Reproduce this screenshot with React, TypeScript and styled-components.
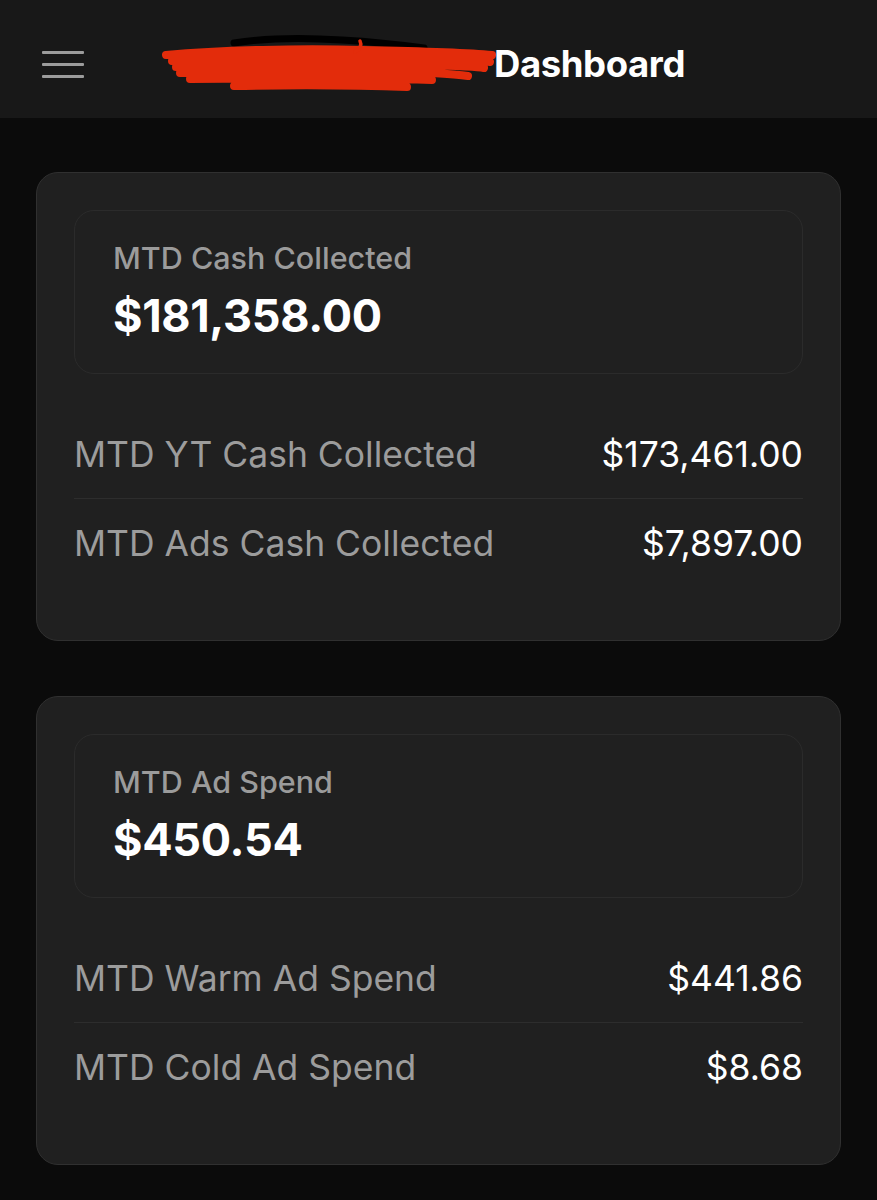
import React from 'react'
import styled, { createGlobalStyle } from 'styled-components'

const GlobalStyle = createGlobalStyle`
  html, body {
    margin: 0;
    padding: 0;
    background: #0b0b0b;
  }
  body {
    font-family: Inter, 'Noto Sans', 'Liberation Sans', sans-serif;
    -webkit-font-smoothing: antialiased;
  }
`

const Page = styled.div`
  min-height: 1200px;
  background: #0b0b0b;
`

const Header = styled.header`
  height: 118px;
  background: #181818;
  display: flex;
  align-items: center;
  padding: 10px 0 0 42px;
  box-sizing: border-box;
`

const MenuButton = styled.button`
  width: 42px;
  height: 27px;
  padding: 0;
  border: none;
  background: transparent;
  display: flex;
  flex-direction: column;
  justify-content: space-between;
  cursor: pointer;
`

const MenuLine = styled.span`
  display: block;
  height: 3px;
  width: 100%;
  background: #9c9c9c;
  border-radius: 1px;
`

const TitleWrap = styled.div`
  display: flex;
  align-items: center;
  margin-left: 78px;
`

const Scribble = styled.svg`
  width: 336px;
  height: 64px;
  margin-right: -4px;
  margin-top: 2px;
`

const Title = styled.h1`
  margin: 0;
  font-size: 36.5px;
  font-weight: 700;
  color: #ffffff;
  letter-spacing: -0.4px;
`

const Content = styled.main`
  display: flex;
  flex-direction: column;
  gap: 55px;
  padding: 54px 36px 40px;
`

const Card = styled.section`
  background: #202020;
  border: 1px solid #303030;
  border-radius: 22px;
  padding: 37px 37px 53px;
`

const SummaryBox = styled.div`
  height: 164px;
  box-sizing: border-box;
  border: 1px solid #2b2b2b;
  border-radius: 20px;
  padding: 30px 38px 0;
  margin-bottom: 36px;
`

const SummaryLabel = styled.div`
  font-size: 30.5px;
  line-height: 34px;
  color: #9b9b9b;
  font-weight: 500;
`

const SummaryValue = styled.div`
  font-size: 45px;
  line-height: 54px;
  font-weight: 700;
  color: #ffffff;
  margin-top: 14px;
  letter-spacing: -0.3px;
`

const Row = styled.div<{ $divider?: boolean }>`
  height: 88px;
  display: flex;
  align-items: center;
  justify-content: space-between;
  border-top: ${(p) => (p.$divider ? '1px solid #2d2d2d' : 'none')};
`

const RowLabel = styled.span`
  font-size: 35.5px;
  color: #9c9c9c;
`

const RowValue = styled.span`
  font-size: 35.5px;
  color: #ffffff;
`

interface Metric {
  label: string
  value: string
}

interface Section {
  title: string
  total: string
  items: Metric[]
}

const sections: Section[] = [
  {
    title: 'MTD Cash Collected',
    total: '$181,358.00',
    items: [
      { label: 'MTD YT Cash Collected', value: '$173,461.00' },
      { label: 'MTD Ads Cash Collected', value: '$7,897.00' },
    ],
  },
  {
    title: 'MTD Ad Spend',
    total: '$450.54',
    items: [
      { label: 'MTD Warm Ad Spend', value: '$441.86' },
      { label: 'MTD Cold Ad Spend', value: '$8.68' },
    ],
  },
]

const RedactScribble: React.FC = () => (
  <Scribble viewBox="0 0 336 64" fill="none">
    {/* black marker stroke on top */}
    <path d="M72 10 C110 4 150 5 180 7 C215 9 240 12 262 15" stroke="#000" strokeWidth="7" strokeLinecap="round" />
    {/* red redaction strokes */}
    <path
      d="M4 22 C60 17 140 15 200 17 C250 18 300 19 330 22 M10 28 C80 24 170 23 250 25 C290 26 315 27 328 29 M14 34 C90 31 180 30 260 32 C300 33 318 34 322 35 M18 40 C100 38 190 38 270 40 C290 41 300 42 306 43 M28 46 C110 45 200 45 270 47 M72 53 C130 52 190 52 245 54"
      stroke="#e32c0b"
      strokeWidth="8"
      strokeLinecap="round"
    />
    <path d="M198 8 C200 12 198 16 193 19" stroke="#e32c0b" strokeWidth="3.5" strokeLinecap="round" />
  </Scribble>
)

const MetricCard: React.FC<{ section: Section }> = ({ section }) => (
  <Card>
    <SummaryBox>
      <SummaryLabel>{section.title}</SummaryLabel>
      <SummaryValue>{section.total}</SummaryValue>
    </SummaryBox>
    {section.items.map((item, i) => (
      <Row key={item.label} $divider={i > 0}>
        <RowLabel>{item.label}</RowLabel>
        <RowValue>{item.value}</RowValue>
      </Row>
    ))}
  </Card>
)

const App: React.FC = () => {
  return (
    <Page>
      <GlobalStyle />
      <Header>
        <MenuButton aria-label="menu">
          <MenuLine />
          <MenuLine />
          <MenuLine />
        </MenuButton>
        <TitleWrap>
          <RedactScribble />
          <Title>Dashboard</Title>
        </TitleWrap>
      </Header>
      <Content>
        {sections.map((s) => (
          <MetricCard key={s.title} section={s} />
        ))}
      </Content>
    </Page>
  )
}

export default App
